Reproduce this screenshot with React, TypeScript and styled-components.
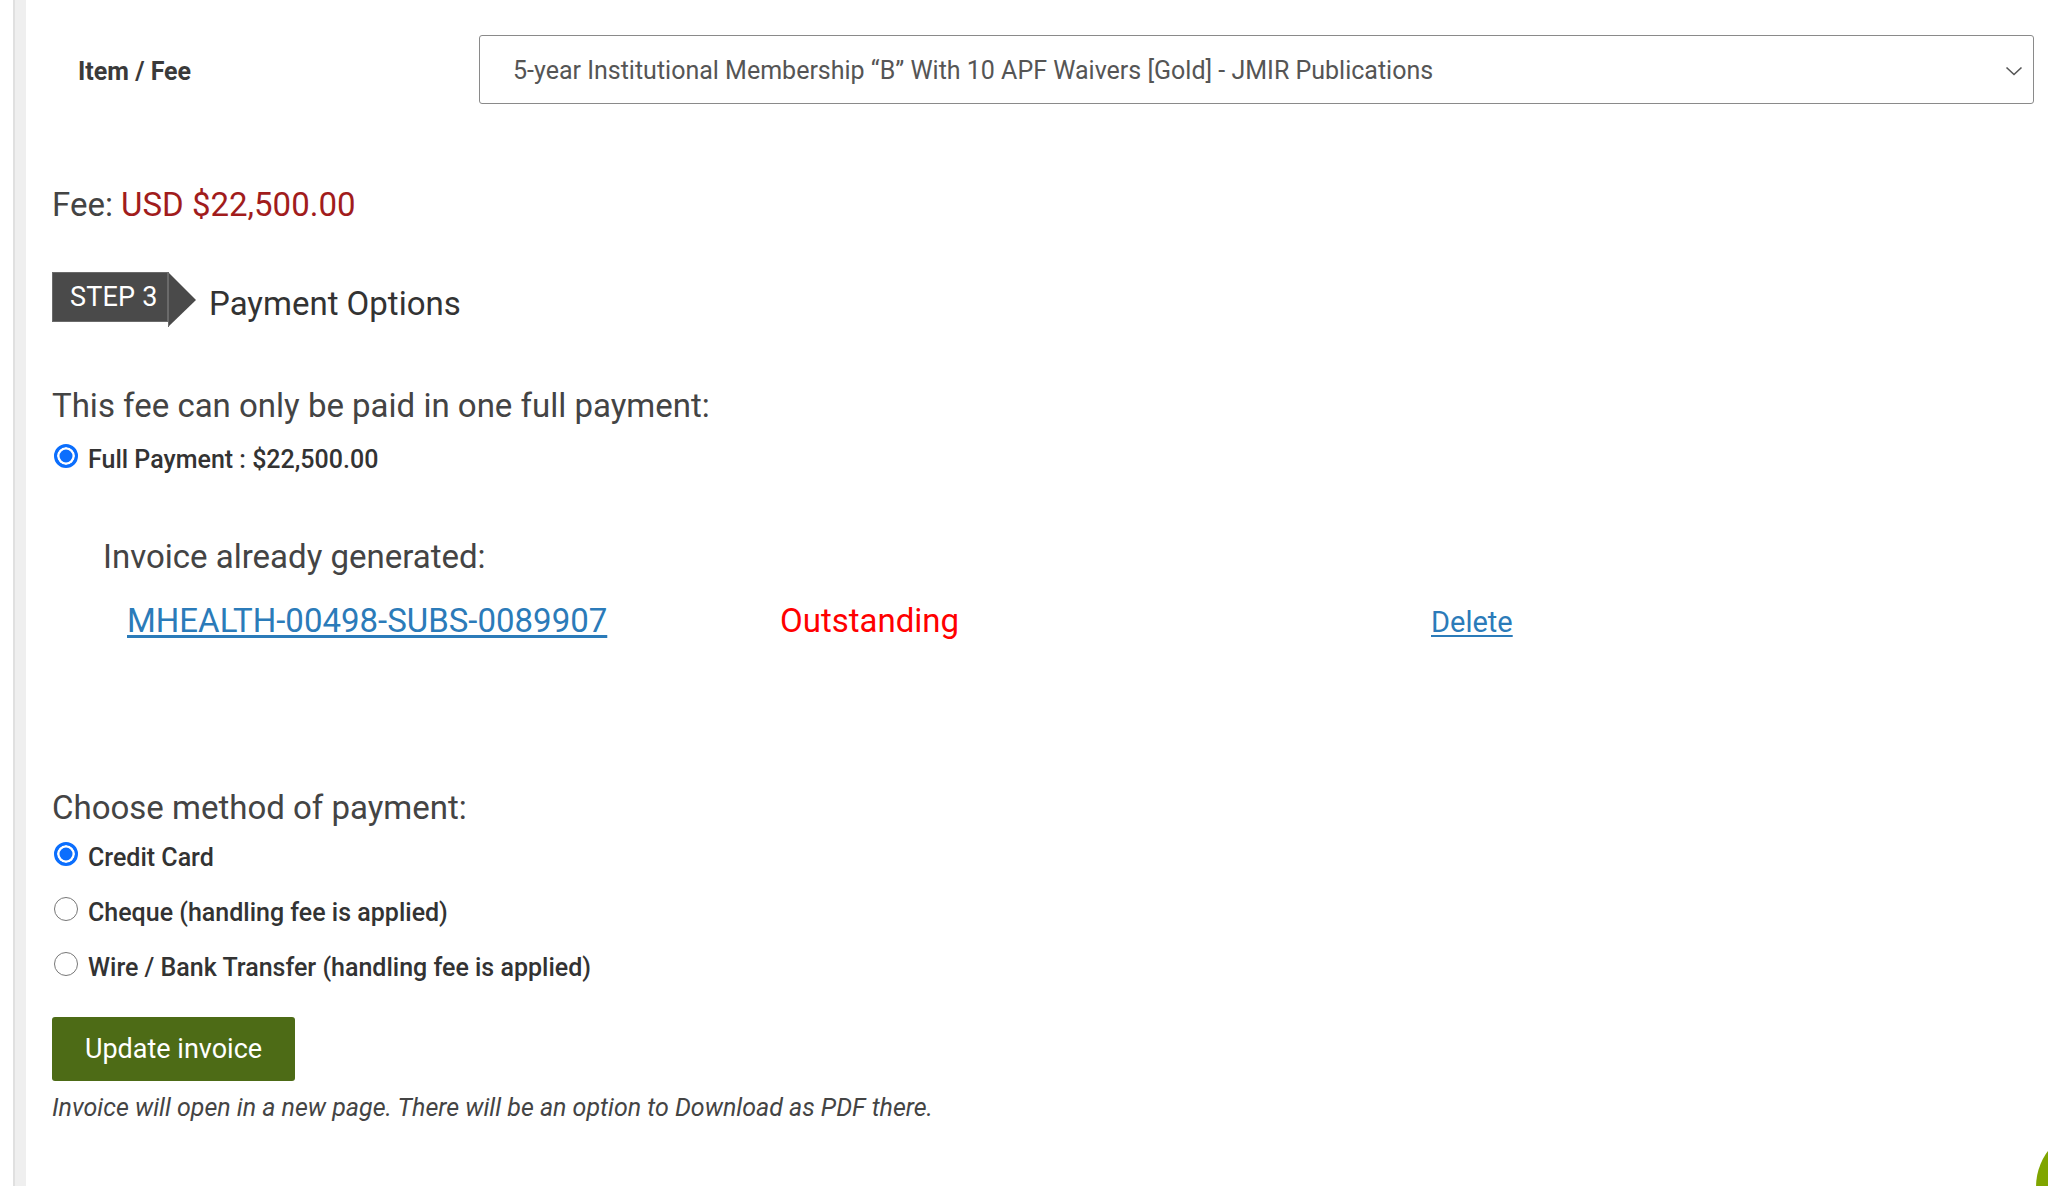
import React from 'react'
import styled, { createGlobalStyle } from 'styled-components'

const GlobalStyle = createGlobalStyle`
    html, body {
        margin: 0;
        padding: 0;
        background: #ffffff;
        font-family: Roboto, "Liberation Sans", Arial, sans-serif;
        color: #444444;
    }
`
const Page = styled.div`
    display: flex;
    min-height: 100vh;
`
const Rail = styled.div`
    flex: 0 0 11px;
    margin-left: 13px;
    background: #efefef;
    border-left: 2px solid #e0e0e0;
`
const Content = styled.div`
    flex: 1;
    padding: 35px 14px 0 26px;
    display: flex;
    flex-direction: column;
    align-items: flex-start;
`
const ItemRow = styled.div`
    display: flex;
    align-items: center;
    width: 100%;
    height: 69px;
`
const ItemLabel = styled.div`
    flex: 0 0 427px;
    box-sizing: border-box;
    padding-left: 26px;
    padding-top: 3px;
    font-size: 25px;
    font-weight: 700;
    color: #3a3a3a;
`
const SelectBox = styled.div`
    flex: 1;
    height: 69px;
    box-sizing: border-box;
    border: 1.5px solid #8a8a8a;
    border-radius: 3px;
    display: flex;
    align-items: center;
    justify-content: space-between;
    padding: 2px 10px 0 33px;
    font-size: 25px;
    color: #555555;
    cursor: pointer;
`
const FeeLine = styled.div`
    margin-top: 81px;
    font-size: 33px;
    line-height: 40px;
    color: #444444;
`
const Amount = styled.span`
    color: #a11c1c;
`
const StepRow = styled.div`
    margin-top: 47px;
    display: flex;
    align-items: flex-start;
`
const StepBadge = styled.div`
    width: 116px;
    height: 50px;
    box-sizing: border-box;
    background: #4a4a4a;
    border: 1px solid #6a6a6a;
    color: #ffffff;
    font-size: 27px;
    line-height: 48px;
    padding-left: 17px;
    letter-spacing: 0.2px;
`
const StepArrow = styled.svg`
    display: block;
    width: 28px;
    height: 55px;
`
const StepTitle = styled.div`
    margin-left: 13px;
    font-size: 33px;
    line-height: 64px;
    color: #333333;
`
const Question = styled.div<{ $top: number }>`
    margin-top: ${p => p.$top}px;
    font-size: 33px;
    line-height: 40px;
    color: #444444;
`
const RadioRow = styled.label<{ $top: number }>`
    margin-top: ${p => p.$top}px;
    display: flex;
    align-items: center;
    gap: 10px;
    padding-left: 2px;
    height: 30px;
    cursor: pointer;
`
const RadioDot = styled.span<{ $checked?: boolean }>`
    flex: 0 0 auto;
    width: 24px;
    height: 24px;
    box-sizing: border-box;
    border-radius: 50%;
    margin-top: -6px;
    border: ${p => (p.$checked ? '3px solid #0b6efd' : '1.5px solid #777777')};
    background: ${p => (p.$checked ? '#0b6efd' : '#ffffff')};
    box-shadow: ${p => (p.$checked ? 'inset 0 0 0 2.5px #ffffff' : 'none')};
`
const RadioText = styled.span`
    font-size: 25px;
    font-weight: 500;
    color: #333333;
`
const InvoiceHeading = styled.div`
    margin-top: 63px;
    padding-left: 51px;
    font-size: 33px;
    line-height: 40px;
    color: #444444;
`
const InvoiceTable = styled.div`
    margin-top: 24px;
    padding-left: 75px;
    display: grid;
    grid-template-columns: 653px 651px auto;
    align-items: baseline;
    font-size: 33px;
    line-height: 40px;
`
const TableLink = styled.a<{ $small?: boolean }>`
    color: #2b7bb9;
    font-size: ${p => (p.$small ? '29px' : 'inherit')};
    text-decoration: underline;
    text-underline-offset: 3px;
    cursor: pointer;
`
const Status = styled.span`
    color: #ff0000;
`
const UpdateButton = styled.button`
    margin-top: 35px;
    height: 64px;
    width: 243px;
    border: none;
    border-radius: 3px;
    background: #4d6b16;
    color: #ffffff;
    font-family: inherit;
    font-size: 27px;
    cursor: pointer;
`
const Note = styled.div`
    margin-top: 12px;
    font-size: 25px;
    line-height: 30px;
    font-style: italic;
    color: #444444;
`
const ChatBubble = styled.div`
    position: fixed;
    left: 2036px;
    top: 1127px;
    width: 120px;
    height: 120px;
    border-radius: 50%;
    background: #7fa500;
`

type Option = { label: string; checked?: boolean }

const methods: Option[] = [
    { label: 'Credit Card', checked: true },
    { label: 'Cheque (handling fee is applied)' },
    { label: 'Wire / Bank Transfer (handling fee is applied)' },
]

const App = () => {
    return (
        <>
            <GlobalStyle />
            <Page>
                <Rail />
                <Content>
                    <ItemRow>
                        <ItemLabel>Item / Fee</ItemLabel>
                        <SelectBox>
                            <span>5-year Institutional Membership “B” With 10 APF Waivers [Gold] - JMIR Publications</span>
                            <svg width="18" height="10" viewBox="0 0 18 10">
                                <path d="M1.5 1.5 L9 8.5 L16.5 1.5" fill="none" stroke="#555" strokeWidth="1.6" />
                            </svg>
                        </SelectBox>
                    </ItemRow>

                    <FeeLine>
                        Fee: <Amount>USD $22,500.00</Amount>
                    </FeeLine>

                    <StepRow>
                        <StepBadge>STEP 3</StepBadge>
                        <StepArrow viewBox="0 0 28 55">
                            <polygon points="0,0 28,28 0,55" fill="#4a4a4a" />
                            <line x1="0.5" y1="0" x2="0.5" y2="55" stroke="#6a6a6a" strokeWidth="1" />
                        </StepArrow>
                        <StepTitle>Payment Options</StepTitle>
                    </StepRow>

                    <Question $top={50}>This fee can only be paid in one full payment:</Question>
                    <RadioRow $top={18}>
                        <RadioDot $checked />
                        <RadioText>Full Payment : $22,500.00</RadioText>
                    </RadioRow>

                    <InvoiceHeading>Invoice already generated:</InvoiceHeading>
                    <InvoiceTable>
                        <TableLink>MHEALTH-00498-SUBS-0089907</TableLink>
                        <Status>Outstanding</Status>
                        <TableLink $small>Delete</TableLink>
                    </InvoiceTable>

                    <Question $top={146}>Choose method of payment:</Question>
                    {methods.map((m, i) => (
                        <RadioRow key={m.label} $top={i === 0 ? 14 : 25}>
                            <RadioDot $checked={m.checked} />
                            <RadioText>{m.label}</RadioText>
                        </RadioRow>
                    ))}

                    <UpdateButton>Update invoice</UpdateButton>
                    <Note>Invoice will open in a new page. There will be an option to Download as PDF there.</Note>
                </Content>
            </Page>
            <ChatBubble />
        </>
    )
}

export default App
